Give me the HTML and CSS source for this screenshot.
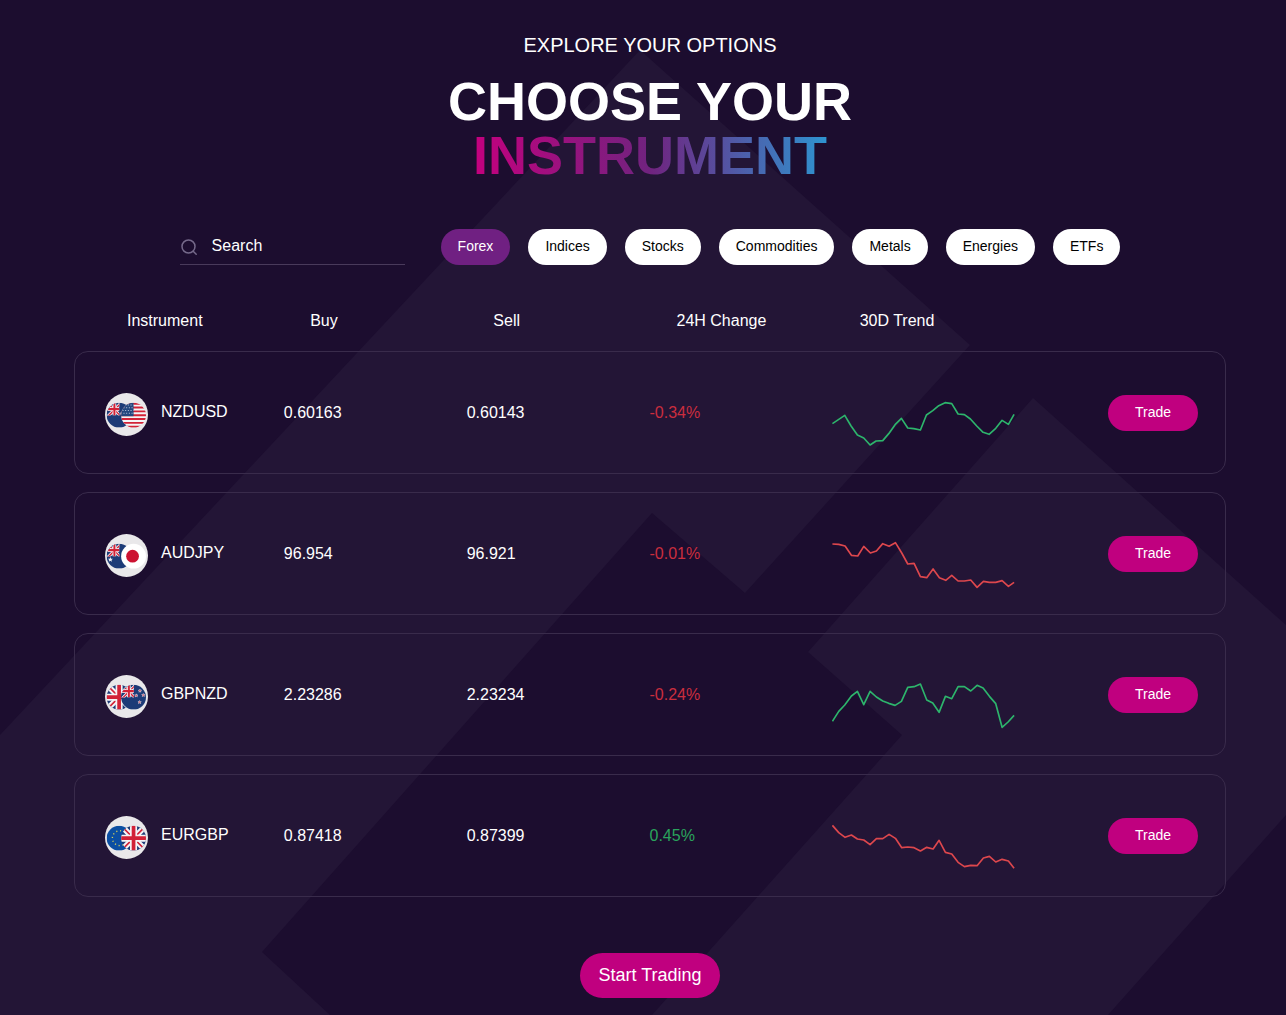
FILE: index.html
```html
<!DOCTYPE html>
<html lang="en">
<head>
<meta charset="utf-8">
<meta name="viewport" content="width=device-width, initial-scale=1">
<title>Choose your instrument</title>
<link rel="stylesheet" href="styles.css">
</head>
<body>
<svg class="defs" aria-hidden="true">
  <defs>
    <clipPath id="round"><circle cx="37" cy="37" r="37"/></clipPath>
    <clipPath id="canton"><rect width="38" height="38"/></clipPath>
    <g id="union">
      <rect width="74" height="74" fill="#1d3b77"/>
      <path d="M0 0L74 74M74 0L0 74" stroke="#f4f4f6" stroke-width="17"/>
      <path d="M0 0L74 74M74 0L0 74" stroke="#d22237" stroke-width="5"/>
      <path d="M37 0V74M0 37H74" stroke="#f4f4f6" stroke-width="21"/>
      <path d="M37 0V74M0 37H74" stroke="#d22237" stroke-width="11"/>
    </g>
    <g id="ensign">
      <rect width="74" height="74" fill="#1d3b77"/>
      <g clip-path="url(#canton)">
        <rect width="38" height="38" fill="#1d3b77"/>
        <path d="M0 -2L46 44M46 -2L0 44" stroke="#f4f4f6" stroke-width="9"/>
        <path d="M0 -2L46 44M46 -2L0 44" stroke="#d22237" stroke-width="4"/>
        <path d="M23 0V38M0 19H38" stroke="#f4f4f6" stroke-width="11"/>
        <path d="M23 0V38M0 19H38" stroke="#d22237" stroke-width="6"/>
      </g>
    </g>
    <path id="star" d="M0-5L1.4-1.6 5-1.5 2.2.8 3.2 4.2 0 2.2-3.2 4.2-2.2.8-5-1.5-1.4-1.6z"/>
    <g id="flag-gb" clip-path="url(#round)"><use href="#union"/></g>
    <g id="flag-nz" clip-path="url(#round)">
      <use href="#ensign"/>
      <g fill="#e0384c" stroke="#f4f4f6" stroke-width="1.500">
        <use href="#star" x="56" y="18"/><use href="#star" x="45" y="32"/><use href="#star" x="66" y="31"/><use href="#star" x="55" y="52"/>
      </g>
    </g>
    <g id="flag-au" clip-path="url(#round)">
      <use href="#ensign"/>
      <g fill="#f4f4f6"><use href="#star" transform="translate(11 47) scale(1.5)"/><use href="#star" x="53" y="20"/><use href="#star" x="55" y="55"/></g>
    </g>
    <g id="flag-us" clip-path="url(#round)">
      <rect width="74" height="74" fill="#f4f4f6"/>
      <path d="M0 3H74M0 14.400H74M0 25.800H74M0 37.200H74M0 48.600H74M0 60H74M0 71.400H74" stroke="#d22237" stroke-width="5.700"/>
      <rect width="37" height="40" fill="#24477f"/>
      <path d="M4 7H37M7 15H37M4 23H37M7 31H37" stroke="#b7c6dc" stroke-width="3" stroke-dasharray="3 5"/>
    </g>
    <g id="flag-jp">
      <circle cx="37" cy="37" r="37" fill="#fff"/><circle cx="34" cy="37" r="19" fill="#cc1231"/>
    </g>
    <g id="flag-eu" clip-path="url(#round)">
      <rect width="74" height="74" fill="#0b4ea2"/>
      <circle cx="39" cy="37" r="22" fill="none" stroke="#d5d05a" stroke-width="4" stroke-dasharray="3.500 8.020"/>
    </g>
  </defs>
</svg>

<main class="page">
  <svg class="backdrop" viewBox="0 0 1286 1015" preserveAspectRatio="xMidYMin slice" aria-hidden="true">
    <path d="M640 50L970 345 745 593 652 513 262 952 330 1015H0V735z"/>
    <path d="M1033 398L1286 625V815L1108 1015H652L902 735 808 652z"/>
  </svg>

  <div class="content">
    <header class="intro">
      <p class="eyebrow">EXPLORE YOUR OPTIONS</p>
      <h1 class="title">CHOOSE YOUR<br><span class="title-accent">INSTRUMENT</span></h1>
    </header>

    <div class="filters">
      <label class="search">
        <svg class="search-icon" viewBox="0 0 18 18" fill="none" stroke="currentColor" stroke-width="1.500" stroke-linecap="round" aria-hidden="true"><circle cx="8.500" cy="8.500" r="6.500"/><path d="M13.200 13.200L16.200 16.200"/></svg>
        <input class="search-input" type="text" placeholder="Search" aria-label="Search">
      </label>
      <nav class="tabs" aria-label="Categories">
        <button class="tab tab-active" type="button">Forex</button>
        <button class="tab" type="button">Indices</button>
        <button class="tab" type="button">Stocks</button>
        <button class="tab" type="button">Commodities</button>
        <button class="tab" type="button">Metals</button>
        <button class="tab" type="button">Energies</button>
        <button class="tab" type="button">ETFs</button>
      </nav>
    </div>

    <table class="quotes">
      <thead>
        <tr class="head-row"><th>Instrument</th><th>Buy</th><th>Sell</th><th>24H Change</th><th>30D Trend</th></tr>
      </thead>
      <tbody>
        <tr class="row">
          <td class="instrument">
            <svg class="flags" viewBox="0 0 128 128" aria-hidden="true"><circle cx="64" cy="64" r="64" fill="#e9e8ea"/><use href="#flag-nz" x="5" y="29"/><use href="#flag-us" x="48" y="29"/></svg>
            <span class="symbol">NZDUSD</span>
          </td>
          <td>0.60163</td><td>0.60143</td><td class="down">-0.34%</td>
          <td class="trend"><svg class="spark spark-up" viewBox="36 21 546 168" role="img" aria-label="30 day trend"><polyline points="36,101 73,76 92,108 111,135 130,144 149,165 167,153 187,152 205,131 224,104 243,85 262,114 280,116 300,120 318,75 337,62 355,47 374,38 394,41 413,72 432,74 450,87 469,108 488,127 506,133 526,115 545,91 564,103 581,73"/></svg></td>
          <td class="action"><button class="trade" type="button">Trade</button></td>
        </tr>
        <tr class="row">
          <td class="instrument">
            <svg class="flags" viewBox="0 0 128 128" aria-hidden="true"><circle cx="64" cy="64" r="64" fill="#e9e8ea"/><use href="#flag-au" x="5" y="29"/><use href="#flag-jp" x="48" y="29"/></svg>
            <span class="symbol">AUDJPY</span>
          </td>
          <td>96.954</td><td>96.921</td><td class="down">-0.01%</td>
          <td class="trend"><svg class="spark spark-down" viewBox="36 24 546 168" role="img" aria-label="30 day trend"><polyline points="36,42 55,43 74,48 93,76 112,78 130,49 150,69 168,63 187,41 206,49 225,38 244,69 262,102 281,100 300,140 319,143 338,117 357,143 376,151 394,136 413,153 432,153 451,150 470,172 489,154 507,157 526,157 545,152 564,169 581,157"/></svg></td>
          <td class="action"><button class="trade" type="button">Trade</button></td>
        </tr>
        <tr class="row">
          <td class="instrument">
            <svg class="flags" viewBox="0 0 128 128" aria-hidden="true"><circle cx="64" cy="64" r="64" fill="#e9e8ea"/><use href="#flag-gb" x="5" y="29"/><use href="#flag-nz" x="48" y="29"/></svg>
            <span class="symbol">GBPNZD</span>
          </td>
          <td>2.23286</td><td>2.23234</td><td class="down">-0.24%</td>
          <td class="trend"><svg class="spark spark-up" viewBox="36 24 546 168" role="img" aria-label="30 day trend"><polyline points="36,151 55,121 73,102 93,75 111,61 130,101 149,61 168,78 187,90 205,97 224,103 243,91 262,49 281,47 300,39 319,87 337,96 356,124 375,76 394,83 413,47 432,47 451,60 470,43 488,51 507,76 526,98 545,169 563,153 581,133"/></svg></td>
          <td class="action"><button class="trade" type="button">Trade</button></td>
        </tr>
        <tr class="row">
          <td class="instrument">
            <svg class="flags" viewBox="0 0 128 128" aria-hidden="true"><circle cx="64" cy="64" r="64" fill="#e9e8ea"/><use href="#flag-eu" x="5" y="29"/><use href="#flag-gb" x="48" y="29"/></svg>
            <span class="symbol">EURGBP</span>
          </td>
          <td>0.87418</td><td>0.87399</td><td class="up">0.45%</td>
          <td class="trend"><svg class="spark spark-down" viewBox="36 18 546 168" role="img" aria-label="30 day trend"><polyline points="36,34 55,56 74,70 93,63 111,75 130,78 149,92 168,74 187,74 206,61 225,73 244,101 262,99 281,101 300,111 319,100 338,105 356,79 375,115 394,120 413,145 432,158 451,154 470,155 489,132 507,127 526,144 545,136 564,141 581,163"/></svg></td>
          <td class="action"><button class="trade" type="button">Trade</button></td>
        </tr>
      </tbody>
    </table>

    <button class="start" type="button">Start Trading</button>
  </div>
</main>
</body>
</html>
```
FILE: styles.css
```css
* {
  box-sizing: border-box;
}

body {
  margin: 0;
  background: #1c0d2f;
  color: #fff;
  font-family: "Liberation Sans", Arial, sans-serif;
  font-size: 16px;
  line-height: 20px;
}

button,
input {
  font-family: inherit;
}

button {
  border: 0;
  cursor: pointer;
}

.defs {
  position: absolute;
  width: 0;
  height: 0;
}

.page {
  position: relative;
  min-height: 100vh;
  overflow: hidden;
}

.backdrop {
  position: absolute;
  inset: 0;
  width: 100%;
  height: 100%;
  fill: #231536;
}

.content {
  position: relative;
  display: flex;
  flex-direction: column;
  align-items: center;
  padding: 33px 60px 17px 74px;
}

.intro {
  text-align: center;
}

.eyebrow {
  margin: 0 0 17px;
  font-size: 20px;
  line-height: 24px;
}

.title {
  margin: 0;
  font-size: 54px;
  line-height: 54px;
  font-weight: 700;
}

.title-accent {
  display: inline-block;
  background: linear-gradient(90deg, #c4007e, #70237f 50%, #2e94d1);
  background-clip: text;
  -webkit-background-clip: text;
  color: transparent;
}

.filters {
  display: flex;
  gap: 36px;
  margin-top: 47px;
}

.search {
  display: flex;
  align-items: center;
  gap: 14px;
  width: 225px;
  height: 36px;
  border-bottom: 1px solid #493a5b;
}

.search-icon {
  flex: none;
  width: 18px;
  height: 18px;
  color: #75698a;
}

.search-input {
  flex: 1;
  min-width: 0;
  height: 32px;
  padding: 0 0 2px;
  border: 0;
  outline: 0;
  background: none;
  color: #fff;
  font-size: 16px;
}

.search-input::placeholder {
  color: #fff;
  opacity: 1;
}

.tabs {
  display: flex;
  gap: 18px;
}

.tab {
  height: 36px;
  padding: 0 17px 2px;
  border-radius: 18px;
  background: #fff;
  color: #000;
  font-size: 14px;
}

.tab-active {
  background: #702082;
  color: #fff;
}

.quotes,
.quotes tbody {
  display: flex;
  flex-direction: column;
}

.quotes {
  width: 100%;
  margin-top: 46px;
  gap: 20px;
}

.quotes tbody {
  gap: 18px;
}

.quotes thead {
  display: block;
}

.head-row,
.row {
  display: grid;
  grid-template-columns: repeat(6, 1fr);
  align-items: center;
  padding: 0 27px 0 26px;
}

.head-row th {
  padding: 0 0 0 27px;
  font-weight: 400;
  text-align: left;
}

.row {
  min-height: 123px;
  border: 1px solid #392b4b;
  border-radius: 14px;
}

.row td {
  padding: 0;
}

.row .instrument {
  display: flex;
  align-items: center;
  gap: 13px;
  padding: 4px 0 0 4px;
}

.flags {
  flex: none;
  width: 43px;
  height: 43px;
}

.symbol {
  padding-bottom: 6px;
}

.down {
  color: #cb2d3e;
}

.up {
  color: #2aa35c;
}

.row .trend {
  padding-top: 24px;
}

.spark {
  display: block;
  width: 100%;
  height: 56px;
  fill: none;
  stroke-width: 5;
  stroke-linejoin: round;
}

.spark-up {
  stroke: #2db56c;
}

.spark-down {
  stroke: #dd474d;
}

.action {
  text-align: right;
}

.trade {
  width: 90px;
  height: 36px;
  padding: 0 0 2px;
  border-radius: 18px;
  background: #c0007f;
  color: #fff;
  font-size: 14px;
}

.start {
  height: 45px;
  margin-top: 56px;
  padding: 0 18px;
  border-radius: 23px;
  background: #c0007f;
  color: #fff;
  font-size: 18px;
}
```
